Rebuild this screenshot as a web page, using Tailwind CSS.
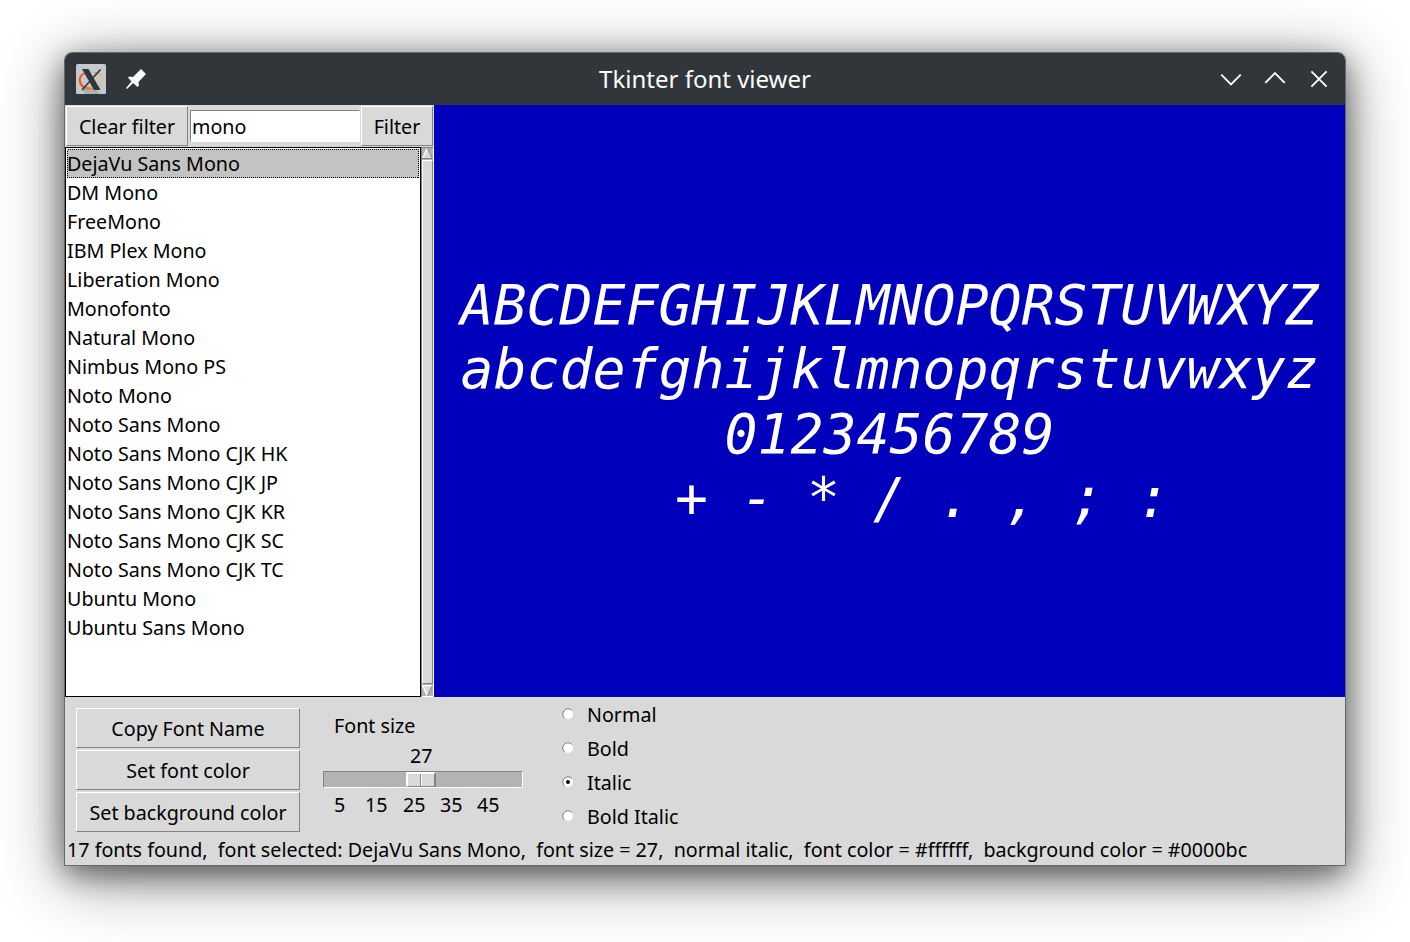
<!DOCTYPE html>
<html lang="en">
<head>
<meta charset="utf-8">
<title>Tkinter font viewer</title>
<script src="https://cdn.jsdelivr.net/npm/@tailwindcss/browser@4"></script>
</head>
<body class="h-[942px] w-[1410px] overflow-hidden bg-white pt-[52px] pl-[64px] font-['Noto_Sans',sans-serif] text-[19.7px] text-black">
<div class="flex h-[814px] w-[1282px] flex-col overflow-hidden rounded-t-[8px] border border-[#5f6a72] bg-[#d9d9d9] shadow-[0_12px_64px_rgba(0,0,0,0.48),0_8px_28px_rgba(0,0,0,0.45)]">
  <header class="grid h-[52px] shrink-0 grid-cols-[1fr_auto_1fr] items-center bg-[#31363b] text-[#fcfcfc]">
    <div class="flex items-center pl-[11px]">
      <svg class="h-[30px] w-[30px]" viewBox="0 0 30 30" fill="none">
        <defs><linearGradient id="ring" x1="3" y1="0" x2="27" y2="0" gradientUnits="userSpaceOnUse"><stop offset="0" stop-color="#f4511e"/><stop offset=".5" stop-color="#f07a3c"/><stop offset="1" stop-color="#f2c078"/></linearGradient></defs>
        <rect width="30" height="30" rx="1.500" fill="#c3cace"/>
        <path d="M6 26L12 22L20 26L24 30H10Z" fill="#aab1b5"/>
        <path d="M10.500 8.500C5 10 3 14 4 18C5 22.500 10 25.500 17 24.500" stroke="url(#ring)" stroke-width="2.200"/>
        <path d="M17 24.500C24 23.500 28 19 26.500 14.500C25.500 11 22 9 18 8.500" stroke="url(#ring)" stroke-width="1.500"/>
        <path d="M6 5H12.500L24.500 26H18Z" fill="#31363b"/>
        <path d="M24.500 5.500L6 26" stroke="#31363b" stroke-width="1.600"/>
      </svg>
      <svg class="ml-[20px] h-[20px] w-[20px]" viewBox="0 0 20 20" fill="#fcfcfc">
        <path d="M15 0L20 5L12.500 13L13 16.500L11.500 18L7 14L1 20L0 19L5.500 12.500L2 8.800L3.500 7.500L7 8Z"/>
      </svg>
    </div>
    <h1 class="text-[24px] leading-none">Tkinter font viewer</h1>
    <div class="flex items-center justify-end gap-[22px] pr-[15px]">
      <svg class="h-[22px] w-[22px]" viewBox="0 0 22 22" fill="none" stroke="#fcfcfc" stroke-width="1.900"><path d="M1.300 6.700L11 16.400L20.700 6.700"/></svg>
      <svg class="h-[22px] w-[22px]" viewBox="0 0 22 22" fill="none" stroke="#fcfcfc" stroke-width="1.900"><path d="M1.300 14.800L11 5.100L20.700 14.800"/></svg>
      <svg class="h-[22px] w-[22px]" viewBox="0 0 22 22" fill="none" stroke="#fcfcfc" stroke-width="1.900"><path d="M3.400 3.400L18.600 18.600M18.600 3.400L3.400 18.600"/></svg>
    </div>
  </header>

  <main class="flex h-[592px] shrink-0">
    <section class="flex w-[369px] flex-col">
      <div class="flex h-[42px] items-center px-px">
        <button class="h-[40px] w-[122px] shrink-0 border border-t-white border-r-[#828282] border-b-[#828282] border-l-white pt-[2px]">Clear filter</button>
        <input class="mr-px ml-[2px] h-[32px] w-[170px] shrink-0 border border-t-[#828282] border-r-white border-b-white border-l-[#828282] bg-white px-px" value="mono">
        <button class="h-[40px] w-[72px] shrink-0 border border-t-white border-r-[#828282] border-b-[#828282] border-l-white pt-[2px]">Filter</button>
      </div>
      <div class="flex min-h-0 flex-1">
        <ul class="w-[356px] border border-black bg-white p-px leading-[29px] whitespace-nowrap">
          <li class="relative h-[29px] bg-[#c3c3c3]">DejaVu Sans Mono
            <svg class="absolute inset-0 h-[29px] w-[352px]" viewBox="0 0 352 29" fill="none" shape-rendering="crispEdges"><rect x=".5" y=".5" width="351" height="28" stroke="#000" stroke-dasharray="1 1"/></svg>
          </li>
          <li>DM Mono</li><li>FreeMono</li><li>IBM Plex Mono</li><li>Liberation Mono</li><li>Monofonto</li><li>Natural Mono</li><li>Nimbus Mono PS</li><li>Noto Mono</li><li>Noto Sans Mono</li><li>Noto Sans Mono CJK HK</li><li>Noto Sans Mono CJK JP</li><li>Noto Sans Mono CJK KR</li><li>Noto Sans Mono CJK SC</li><li>Noto Sans Mono CJK TC</li><li>Ubuntu Mono</li><li>Ubuntu Sans Mono</li>
        </ul>
        <div class="flex w-[13px] flex-col border border-t-[#828282] border-r-white border-b-white border-l-[#828282] bg-[#b3b3b3]">
          <svg class="h-[11px] w-[11px]" viewBox="0 0 11 11"><path d="M5.500 0L11 11H0Z" fill="#d9d9d9"/><path d="M5.500 0L.5 10.500" stroke="#fff" stroke-width="1.400"/><path d="M5.500 0L10.500 10.500H0" stroke="#828282" fill="none"/></svg>
          <div class="mt-px flex-1 border border-t-white border-r-[#828282] border-b-[#828282] border-l-white bg-[#d9d9d9]"></div>
          <svg class="mt-px h-[11px] w-[11px]" viewBox="0 0 11 11"><path d="M0 0H11L5.500 11Z" fill="#d9d9d9"/><path d="M11 .5H.5L5.500 11" stroke="#fff" stroke-width="1.400" fill="none"/><path d="M5.500 11L10.500 .5" stroke="#828282"/></svg>
        </div>
      </div>
    </section>
    <section class="flex flex-1 items-center justify-center bg-[#0000bc]">
      <pre class="pt-[1px] text-center font-['DejaVu_Sans_Mono',monospace] text-[54.8px] leading-[64.2px] text-white italic">ABCDEFGHIJKLMNOPQRSTUVWXYZ
abcdefghijklmnopqrstuvwxyz
0123456789
  + - * / . , ; :</pre>
    </section>
  </main>

  <section class="flex h-[138px] shrink-0">
    <div class="flex flex-col gap-[2px] pt-[11px] pl-[11px]">
      <button class="h-[40px] w-[224px] border border-t-white border-r-[#828282] border-b-[#828282] border-l-white pt-[2px]">Copy Font Name</button>
      <button class="h-[40px] w-[224px] border border-t-white border-r-[#828282] border-b-[#828282] border-l-white pt-[2px]">Set font color</button>
      <button class="h-[40px] w-[224px] border border-t-white border-r-[#828282] border-b-[#828282] border-l-white pt-[2px]">Set background color</button>
    </div>
    <div class="ml-[23px] w-[200px] pt-[15px] leading-[28px]">
      <div class="pl-[11px]">Font size</div>
      <div class="mt-[2px] pl-[87px]">27</div>
      <div class="mt-px h-[17px] border border-t-[#828282] border-r-white border-b-white border-l-[#828282] bg-[#b3b3b3] pl-[82px]">
        <div class="flex h-[15px] w-[30px] border-t-2 border-r-2 border-b border-l-2 border-t-white border-r-[#828282] border-b-[#828282] border-l-white bg-[#d9d9d9]"><i class="ml-[12px] w-[2px] border-r border-l border-r-white border-l-[#828282]"></i></div>
      </div>
      <div class="mt-[3px] flex pl-[11px]"><span class="w-[31px]">5</span><span class="w-[38px]">15</span><span class="w-[37px]">25</span><span class="w-[37px]">35</span><span>45</span></div>
    </div>
    <div class="ml-[39px] pt-px leading-[34px]">
      <label class="flex"><svg class="mt-[10px] mr-[13px] h-[12px] w-[12px]" viewBox="0 0 12 12"><circle cx="6" cy="6" r="5" fill="#fff"/><path d="M2.300 9.700A5 5 0 0 1 9.700 2.300" stroke="#828282" fill="none"/></svg>Normal</label>
      <label class="flex"><svg class="mt-[10px] mr-[13px] h-[12px] w-[12px]" viewBox="0 0 12 12"><circle cx="6" cy="6" r="5" fill="#fff"/><path d="M2.300 9.700A5 5 0 0 1 9.700 2.300" stroke="#828282" fill="none"/></svg>Bold</label>
      <label class="flex"><svg class="mt-[10px] mr-[13px] h-[12px] w-[12px]" viewBox="0 0 12 12"><circle cx="6" cy="6" r="5" fill="#fff"/><path d="M2.300 9.700A5 5 0 0 1 9.700 2.300" stroke="#828282" fill="none"/><circle cx="6" cy="6" r="2"/></svg>Italic</label>
      <label class="flex"><svg class="mt-[10px] mr-[13px] h-[12px] w-[12px]" viewBox="0 0 12 12"><circle cx="6" cy="6" r="5" fill="#fff"/><path d="M2.300 9.700A5 5 0 0 1 9.700 2.300" stroke="#828282" fill="none"/></svg>Bold Italic</label>
    </div>
  </section>
  <footer class="pl-[2px] leading-[29px] whitespace-pre">17 fonts found,  font selected: DejaVu Sans Mono,  font size = 27,  normal italic,  font color = #ffffff,  background color = #0000bc</footer>
</div>
</body>
</html>
